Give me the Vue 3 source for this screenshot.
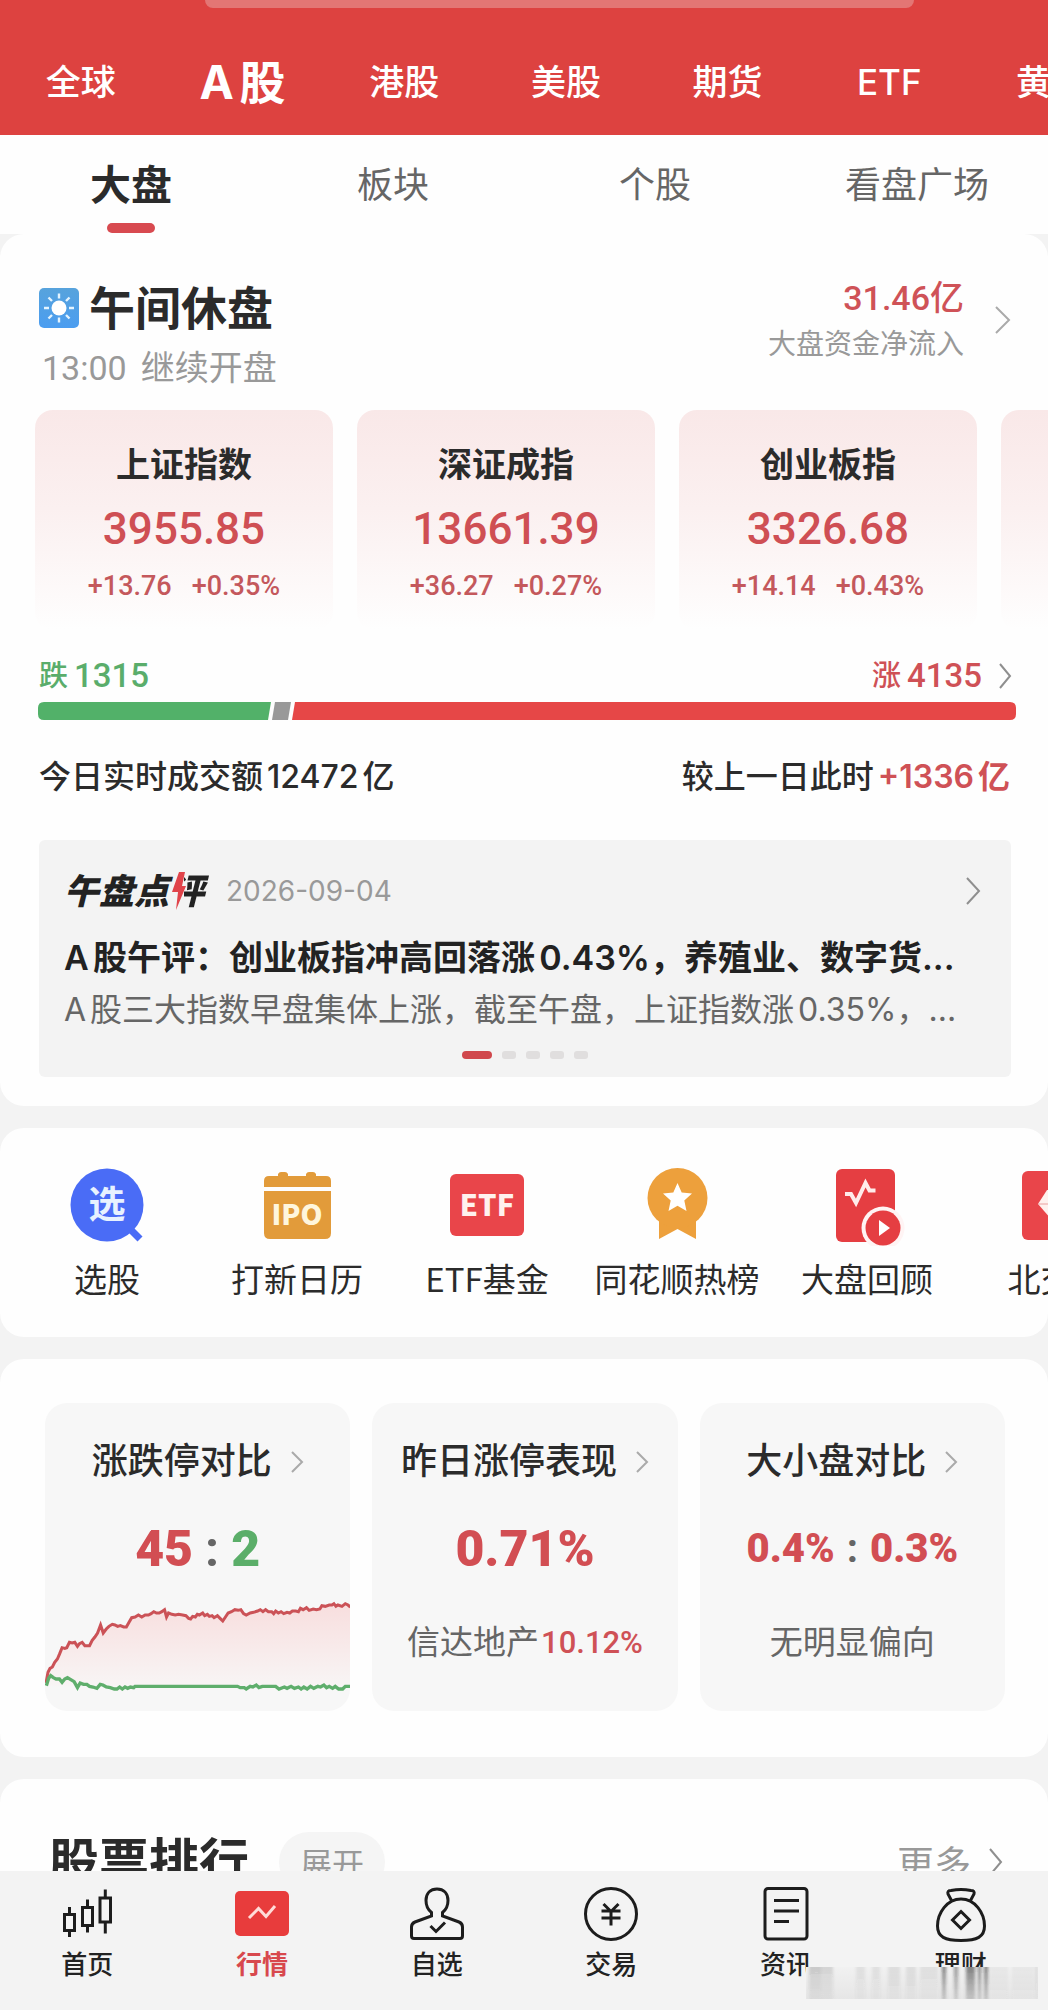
<script setup>
const markets = ['全球', 'A股', '港股', '美股', '期货', 'ETF', '黄金']
const sections = ['大盘', '板块', '个股', '看盘广场']

const indices = [
  { name: '上证指数', value: '3955.85', diff: '+13.76', pct: '+0.35%' },
  { name: '深证成指', value: '13661.39', diff: '+36.27', pct: '+0.27%' },
  { name: '创业板指', value: '3326.68', diff: '+14.14', pct: '+0.43%' },
]

const upLine =
  '78,362 84,330 90,318 97,314 104,300 112,290 118,276 126,256 134,258 140,256 148,240 156,242 164,240 172,252 178,244 186,240 194,250 208,250 216,234 224,224 232,212 241,188 249,212 258,200 266,192 276,186 284,188 292,192 300,190 310,194 318,194 326,180 334,166 344,164 354,158 364,164 374,158 384,158 392,154 400,148 408,152 416,152 424,148 432,142 438,164 444,152 454,156 464,158 474,156 486,158 496,160 504,168 510,170 516,162 524,164 530,156 536,158 546,152 552,160 560,156 566,162 574,160 580,166 590,160 598,168 606,176 614,164 622,152 632,148 642,142 652,144 660,142 668,154 676,158 688,152 698,150 710,146 718,142 726,148 734,142 742,148 752,148 758,154 764,146 772,152 780,148 788,154 798,150 806,152 814,146 824,146 832,148 838,138 846,142 856,136 864,144 876,140 886,142 896,140 902,130 912,132 924,128 932,128 938,124 944,132 950,128 962,132 972,124 980,128 987,134'
const downLine =
  '79,370 86,348 92,340 100,346 108,350 118,350 126,360 134,350 142,346 152,352 162,358 172,376 180,362 190,366 200,366 208,372 218,374 230,378 240,366 248,368 258,374 270,376 282,380 290,380 298,374 306,380 314,374 322,378 330,374 340,376 344,372 650,372 658,376 670,376 676,380 688,372 696,374 706,368 714,376 724,372 740,372 764,372 774,380 790,374 798,378 810,372 820,378 832,374 840,380 848,374 858,380 868,372 878,378 890,372 898,374 908,368 916,376 924,372 934,378 942,372 952,380 964,380 972,372 987,372'
const upArea = `78,372 ${upLine} 987,372`

const streaks = [
  [3, 12, 0.16], [15, 12, 0.12], [50, 9, 0.07], [66, 8, 0.07], [82, 12, 0.08], [100, 10, 0.08],
  [114, 18, 0.07], [136, 4, 0.5], [148, 4, 0.4], [160, 9, 0.5], [172, 3, 0.5], [178, 4, 0.5], [184, 18, 0.04], [206, 22, 0.04], [230, 1, 0.25],
]
</script>

<template>
  <div class="app">
    <header class="top">
      <div class="search-edge"></div>
      <nav class="markets">
        <a v-for="(m, i) in markets" :key="m" href="#" :class="{ on: i === 1 }">{{ m }}</a>
      </nav>
    </header>

    <main class="content">
      <nav class="sections">
        <a v-for="(s, i) in sections" :key="s" href="#" :class="{ on: i === 0 }">{{ s }}</a>
      </nav>

      <section class="card overview">
        <div class="status">
          <div class="status-left">
            <h1>
              <svg width="40" height="40" viewBox="0 0 40 40" aria-hidden="true">
                <defs>
                  <linearGradient id="sky" x1="0" y1="0" x2="0" y2="1">
                    <stop offset="0" stop-color="#57a3dc" />
                    <stop offset="1" stop-color="#4b9df0" />
                  </linearGradient>
                </defs>
                <rect width="40" height="40" rx="5" fill="url(#sky)" />
                <circle cx="20" cy="20" r="7.5" fill="#fff" />
                <path d="M20 5.5v5M20 29.5v5M5 20h5M30 20h5M9.5 9.5l3.5 3.5M27 27l3.5 3.5M30.5 9.5L27 13M13 27l-3.500 3.500" stroke="#e4f4ff" stroke-width="2.400" />
              </svg>
              <span>午间休盘</span>
            </h1>
            <p><span class="clock">13:00</span><span>继续开盘</span></p>
          </div>
          <a href="#" class="flow">
            <span class="flow-text">
              <b>31.46亿</b>
              <small>大盘资金净流入</small>
            </span>
            <svg class="chev light" width="18" height="30" viewBox="0 0 18 30"><path d="M2 2l13 13L2 28" /></svg>
          </a>
        </div>

        <div class="indices">
          <a v-for="x in indices" :key="x.name" href="#" class="index">
            <span class="index-name">{{ x.name }}</span>
            <span class="index-value">{{ x.value }}</span>
            <span class="index-change"><span>{{ x.diff }}</span><span>{{ x.pct }}</span></span>
          </a>
          <div class="index"></div>
        </div>

        <div class="breadth">
          <span class="down">跌<b>1315</b></span>
          <a href="#" class="up">涨<b>4135</b>
            <svg class="chev" width="14" height="28" viewBox="0 0 14 28"><path d="M2 2l10 12L2 26" /></svg>
          </a>
        </div>
        <svg class="bar" viewBox="0 0 978 18" preserveAspectRatio="none" aria-hidden="true">
          <path d="M6 0H233L230 18H6Q0 18 0 12V6Q0 0 6 0Z" fill="#52b169" />
          <path d="M237 0H253L250 18H234Z" fill="#999" />
          <path d="M257 0H972Q978 0 978 6V12Q978 18 972 18H254Z" fill="#e64747" />
        </svg>
        <div class="turnover">
          <span>今日实时成交额12472亿</span>
          <span>较上一日此时<em>+1336亿</em></span>
        </div>

        <article class="comment">
          <div class="comment-head">
            <h2>午盘点<span class="last">评<svg width="15" height="38" viewBox="0 0 15 38" aria-hidden="true"><path d="M8 0h6l-3 14h4L5 38l2-18H1z" fill="#e0434a" /></svg></span></h2>
            <time>2026-09-04</time>
            <svg class="chev" width="18" height="30" viewBox="0 0 18 30"><path d="M3 2l12 13L3 28" /></svg>
          </div>
          <h3>A股午评：创业板指冲高回落涨0.43%，养殖业、数字货...</h3>
          <p>A股三大指数早盘集体上涨，截至午盘，上证指数涨0.35%，...</p>
          <div class="dots"><i class="on"></i><i></i><i></i><i></i><i></i></div>
        </article>
      </section>

      <section class="card tools">
        <a href="#">
          <span class="tool-icon">
            <svg width="80" height="80" viewBox="0 0 80 80">
              <circle cx="40" cy="39" r="36.500" fill="#4a6cf6" />
              <path d="M60 60l13 13" stroke="#4a6cf6" stroke-width="7" />
              <text x="40" y="52" font-size="37" font-weight="700" fill="#e8f2ff" text-anchor="middle">选</text>
            </svg>
          </span>选股
        </a>
        <a href="#">
          <span class="tool-icon">
            <svg width="80" height="80" viewBox="0 0 80 80" fill="#e29b3a">
              <path d="M7 21V15Q7 10 12 10H21V8Q22 6 24 6H28Q30 6 31 8V10H49V8Q50 6 52 6H56Q58 6 59 8V10H69Q74 10 74 15V21Z" />
              <path d="M7 25H74V67Q74 73 68 73H13Q7 73 7 67Z" />
              <text x="40" y="59" font-size="28" font-weight="900" fill="#fff6dc" text-anchor="middle">IPO</text>
            </svg>
          </span>打新日历
        </a>
        <a href="#">
          <span class="tool-icon">
            <svg width="80" height="80" viewBox="0 0 80 80">
              <rect x="3" y="8" width="74" height="62" rx="6" fill="#e9454a" />
              <text x="40" y="50" font-size="29" font-weight="900" fill="#fff1ee" text-anchor="middle">ETF</text>
            </svg>
          </span>ETF基金
        </a>
        <a href="#">
          <span class="tool-icon">
            <svg width="80" height="80" viewBox="0 0 80 80">
              <path d="M22 50H59V73L40.500 63L22 73Z" fill="#eda03c" />
              <circle cx="40.500" cy="32" r="30" fill="#eda03c" />
              <path d="M40.500 17l4.200 9.500 10.300 1-7.700 7 2.200 10.500-9-5.200-9 5.200 2.200-10.500-7.700-7 10.300-1z" fill="#fff" />
            </svg>
          </span>同花顺热榜
        </a>
        <a href="#">
          <span class="tool-icon">
            <svg width="80" height="80" viewBox="0 0 80 80">
              <rect x="9" y="3" width="59" height="73" rx="6" fill="#e53e42" />
              <path d="M18 28h6l5 9 9.500-20 4 7.500h6" fill="none" stroke="#ffecea" stroke-width="4" />
              <circle cx="56" cy="62" r="21.500" fill="#fff4f4" />
              <circle cx="56" cy="62" r="17.500" fill="#e53e42" />
              <path d="M52 54l11 8-11 8z" fill="#fff" />
            </svg>
          </span>大盘回顾
        </a>
        <a href="#">
          <span class="tool-icon">
            <svg width="80" height="80" viewBox="0 0 80 80">
              <rect x="5" y="5" width="71" height="69" rx="6" fill="#e9454a" />
              <path d="M21 38L30 24H50L59 38L40 60Z" fill="#fff1ee" />
              <path d="M21 38H59" stroke="#e9a0a0" stroke-width="1" />
            </svg>
          </span>北交所
        </a>
      </section>

      <section class="card stats">
        <a href="#" class="stat">
          <span class="stat-title">涨跌停对比<svg class="chev light" width="14" height="24" viewBox="0 0 14 24"><path d="M2 2l10 10L2 22" /></svg></span>
          <span class="stat-num"><b>45</b><i>:</i><b class="green">2</b></span>
          <svg class="chart" viewBox="75 110 912 276" preserveAspectRatio="none" aria-hidden="true">
            <defs>
              <linearGradient id="fade" x1="0" y1="0" x2="0" y2="1">
                <stop offset="0" stop-color="#f8dede" />
                <stop offset="1" stop-color="#f8f5f5" />
              </linearGradient>
            </defs>
            <polygon :points="upArea" fill="url(#fade)" />
            <polyline :points="upLine" fill="none" stroke="#cb5257" stroke-width="9" />
            <polyline :points="downLine" fill="none" stroke="#5fae6c" stroke-width="10" />
          </svg>
        </a>
        <a href="#" class="stat">
          <span class="stat-title">昨日涨停表现<svg class="chev light" width="14" height="24" viewBox="0 0 14 24"><path d="M2 2l10 10L2 22" /></svg></span>
          <span class="stat-num"><b>0.71%</b></span>
          <span class="stat-note"><span>信达地产</span><em>10.12%</em></span>
        </a>
        <a href="#" class="stat">
          <span class="stat-title">大小盘对比<svg class="chev light" width="14" height="24" viewBox="0 0 14 24"><path d="M2 2l10 10L2 22" /></svg></span>
          <span class="stat-num small"><b>0.4%</b><i>:</i><b>0.3%</b></span>
          <span class="stat-note">无明显偏向</span>
        </a>
      </section>

      <section class="card ranking">
        <h2>股票排行</h2>
        <button type="button">展开</button>
        <a href="#">更多<svg class="chev" width="14" height="30" viewBox="0 0 14 30"><path d="M1 2l11 13L1 28" /></svg></a>
      </section>
    </main>

    <nav class="tabbar">
      <a href="#">
        <svg width="56" height="56" viewBox="0 0 56 56">
          <path d="M5.500 28.500h10v16h-10zM10.500 21v7M10.500 45v6M23.500 21.500h10v18h-10zM28.500 13.500v8M28.500 40v6.500M41 12h10.500v24H41zM46.300 3.500V12M46.300 36v11.500" />
        </svg>首页
      </a>
      <a href="#" class="on">
        <svg width="56" height="56" viewBox="0 0 56 56">
          <rect x="1" y="5" width="54" height="45" rx="5" fill="#e83c3c" stroke="none" />
          <path d="M15 32l9.500-9.500 7.500 8L41 20" stroke="#ffdcd8" />
        </svg>行情
      </a>
      <a href="#">
        <svg width="56" height="56" viewBox="0 0 56 56">
          <path d="M22.500 30V26.500C18 23 17 19 17 14.500C17 7 21.500 3 28 3S39 7 39 14.500C39 19 38 23 33.500 26.500V30L50 36Q53.500 37.500 53.500 41V50Q53.500 52.500 51 52.500H5Q2.500 52.500 2.500 50V41Q2.500 37.500 6 36Z" />
          <path d="M21.500 40l5.500 5.500L36 36.500" />
        </svg>自选
      </a>
      <a href="#">
        <svg width="56" height="56" viewBox="0 0 56 56">
          <circle cx="28" cy="28" r="25.500" />
          <path d="M20.500 18l7.500 7.500L35.500 18M18.500 25h19M18.500 32h19M28 25v14.500" />
        </svg>交易
      </a>
      <a href="#">
        <svg width="56" height="56" viewBox="0 0 56 56">
          <rect x="7" y="2.500" width="42" height="50.500" rx="3" />
          <path d="M16 14.500h25M16 25h25M16 35.500h15" />
        </svg>资讯
      </a>
      <a href="#">
        <svg width="56" height="56" viewBox="0 0 56 56">
          <path d="M18.500 14.500L15 8Q14 4.500 18 4.500Q28 2.500 38 4.500Q42 4.500 41 8L37.500 14.500M28 13C14 13 4.500 27 4.500 40C4.500 51 12 54.500 28 54.500S51.500 51 51.500 40C51.500 27 42 13 28 13ZM28 25.500l8.500 8.500-8.500 8.500-8.500-8.500z" />
        </svg>理财
      </a>
      <div class="smudge" aria-hidden="true">
        <svg width="232" height="34" viewBox="0 0 232 34">
          <defs>
            <linearGradient id="veil" x1="0" y1="0" x2="0" y2="1">
              <stop offset="0" stop-color="#f1f1f1" />
              <stop offset="1" stop-color="#e6e6e6" />
            </linearGradient>
            <linearGradient id="streak" x1="0" y1="0" x2="0" y2="1">
              <stop offset="0" stop-color="#111" />
              <stop offset="1" stop-color="#555" stop-opacity="0.500" />
            </linearGradient>
            <filter id="soft" x="-5%" y="-20%" width="110%" height="140%"><feGaussianBlur stdDeviation="1.400 0.600" /></filter>
          </defs>
          <rect width="232" height="32" fill="url(#veil)" />
          <g filter="url(#soft)">
            <rect v-for="(s, i) in streaks" :key="i" :x="s[0]" y="0" :width="s[1]" height="32" :opacity="s[2]" fill="url(#streak)" />
          </g>
        </svg>
      </div>
    </nav>
  </div>
</template>

<style>
body {
  margin: 0;
  background: #f3f3f3;
}
</style>

<style scoped>
.app {
  display: flex;
  flex-direction: column;
  height: 100vh;
  overflow: hidden;
  background: #f3f3f3;
  color: #2b2b2b;
  font-family: Inter, 'Noto Sans CJK SC', sans-serif;
  text-autospace: normal;
}
a {
  color: inherit;
  text-decoration: none;
}
h1, h2, h3, p {
  margin: 0;
}
i, em {
  font-style: normal;
}
svg {
  display: block;
  flex: none;
}
svg text {
  font-family: 'Noto Sans CJK SC', sans-serif;
}
.chev path {
  fill: none;
  stroke: #8f8f8f;
  stroke-width: 2;
}
.chev.light path {
  stroke: #aaa;
}

.top {
  flex: none;
  background: #dd4240;
  overflow: hidden;
}
.search-edge {
  height: 8px;
  margin: 0 134px 0 205px;
  border-radius: 0 0 8px 8px;
  background: #e37674;
}
.markets {
  display: flex;
  width: 108%;
  padding: 44px 0 23px;
}
.markets a {
  flex: 1;
  text-align: center;
  white-space: nowrap;
  color: #fff;
  font-size: 35px;
  font-weight: 500;
  line-height: 60px;
}
.markets a.on {
  font-size: 46px;
  font-weight: 700;
}

.content {
  flex: 1;
  min-height: 0;
  overflow: hidden auto;
  scrollbar-width: none;
}
.sections {
  display: grid;
  grid-template-columns: repeat(4, 1fr);
  height: 71px;
  padding-top: 28px;
  background: #fefefe;
}
.sections a {
  display: flex;
  flex-direction: column;
  align-items: center;
  color: #666;
  font-size: 36px;
  line-height: 44px;
}
.sections a.on {
  color: #2b2b2b;
  font-size: 41px;
  font-weight: 700;
}
.sections a.on::after {
  content: '';
  width: 48px;
  height: 10px;
  margin-top: 16px;
  border-radius: 5px;
  background: #d84a50;
}

.card {
  margin-bottom: 22px;
  border-radius: 24px;
  background: #fefefe;
}

.overview {
  padding: 46px 36px 29px 39px;
}
.status {
  display: flex;
  justify-content: space-between;
  align-items: flex-start;
}
.status-left {
  padding-top: 4px;
}
.status h1 {
  display: flex;
  align-items: center;
  gap: 10px;
  font-size: 46px;
  line-height: 48px;
}
.status p {
  display: flex;
  margin-top: 16px;
  color: #999;
  font-size: 34px;
  line-height: 40px;
}
.clock {
  margin: 0 14px 0 3px;
  font-family: Roboto, sans-serif;
}
.flow {
  display: flex;
  align-items: center;
  gap: 30px;
}
.flow-text {
  display: flex;
  flex-direction: column;
  gap: 12px;
  text-align: right;
}
.flow b {
  color: #cf5257;
  font: 500 34px/36px Roboto, 'Noto Sans CJK SC', sans-serif;
  text-autospace: no-autospace;
}
.flow small {
  color: #999;
  font-size: 28px;
  line-height: 32px;
}

.indices {
  display: flex;
  gap: 24px;
  margin: 22px -36px 0 -4px;
  overflow: hidden;
}
.index {
  flex: 0 0 298px;
  display: flex;
  flex-direction: column;
  align-items: center;
  box-sizing: border-box;
  padding: 33px 0 28px;
  border-radius: 18px;
  background: linear-gradient(#f9e8e8, #fbf0f0 45%, #fefefe);
  font-family: Roboto, 'Noto Sans CJK SC', sans-serif;
}
.index-name {
  font-size: 34px;
  font-weight: 700;
  line-height: 44px;
}
.index-value {
  margin-top: 16px;
  color: #cf4f54;
  font-size: 44px;
  font-weight: 500;
  line-height: 52px;
}
.index-change {
  display: flex;
  gap: 20px;
  margin-top: 15px;
  color: #c4585c;
  font-size: 27px;
  font-weight: 500;
  line-height: 32px;
}

.breadth {
  display: flex;
  justify-content: space-between;
  margin-top: 28px;
  font: 500 29px/36px Roboto, 'Noto Sans CJK SC', sans-serif;
  text-autospace: no-autospace;
}
.breadth b {
  margin-left: 6px;
  font-size: 33px;
  font-weight: 500;
}
.down,
.up {
  display: flex;
  align-items: center;
}
.down {
  color: #5aad6b;
}
.up {
  color: #cf5156;
}
.up svg {
  margin-left: 16px;
}
.bar {
  width: calc(100% + 5px);
  height: 18px;
  margin: 8px 0 0 -1px;
}
.turnover {
  display: flex;
  justify-content: space-between;
  margin: 37px 2px 0 0;
  font-size: 32px;
  font-weight: 500;
  line-height: 40px;
}
.turnover em {
  margin-left: 4px;
  color: #cf5156;
  font-weight: 600;
}

.comment {
  margin: 43px 1px 0 0;
  padding: 29px 25px 18px;
  border-radius: 6px;
  background: #f3f3f3;
}
.comment-head {
  display: flex;
  align-items: center;
}
.comment h2 {
  font-size: 35px;
  font-weight: 900;
  font-style: italic;
  line-height: 44px;
  color: #222;
}
.last {
  position: relative;
  padding-right: 6px;
  background: linear-gradient(90deg, transparent 15px, #222 15px);
  background-clip: text;
  -webkit-background-clip: text;
  color: transparent;
}
.last svg {
  position: absolute;
  left: 2px;
  top: 2px;
}
.comment time {
  margin-left: 16px;
  color: #999;
  font-size: 28px;
}
.comment-head .chev {
  margin: 0 4px 0 auto;
}
.comment h3 {
  margin-top: 23px;
  color: #222;
  font-size: 34px;
  font-weight: 600;
  line-height: 44px;
  white-space: nowrap;
}
.comment p {
  margin-top: 10px;
  color: #666;
  font-size: 32px;
  line-height: 40px;
  white-space: nowrap;
}
.dots {
  display: flex;
  justify-content: center;
  gap: 10px;
  margin-top: 21px;
}
.dots i {
  width: 14px;
  height: 8px;
  border-radius: 3px;
  background: #e0dede;
}
.dots .on {
  width: 30px;
  border-radius: 4px;
  background: #d0474c;
}

.tools {
  display: flex;
  padding: 38px 0 39px 12px;
  overflow: hidden;
}
.tools a {
  flex: 0 0 190px;
  display: flex;
  flex-direction: column;
  align-items: center;
  gap: 12px;
  font-size: 33px;
  line-height: 40px;
  font-family: 'Noto Sans CJK SC', sans-serif;
  white-space: nowrap;
  text-autospace: no-autospace;
}

.stats {
  display: grid;
  grid-template-columns: repeat(3, 1fr);
  gap: 22px;
  padding: 44px 43px 46px 45px;
}
.stat {
  display: flex;
  flex-direction: column;
  align-items: center;
  padding-top: 37px;
  border-radius: 22px;
  background: #f7f7f7;
  overflow: hidden;
  font-family: Roboto, 'Noto Sans CJK SC', sans-serif;
  text-autospace: no-autospace;
}
.stat-title {
  display: flex;
  align-items: center;
  gap: 18px;
  font-size: 36px;
  font-weight: 500;
  line-height: 44px;
}
.stat-num {
  display: flex;
  align-items: center;
  margin-top: 37px;
  color: #d24e53;
  font-size: 50px;
  font-weight: 700;
  line-height: 56px;
}
.stat-num i {
  margin: 0 12px;
  color: #666;
}
.stat-num.small {
  font-size: 40px;
}
.stat-num.small i {
  margin: 0 12px;
}
.stat-num .green {
  color: #5bae69;
}
.stat-note {
  display: flex;
  align-items: center;
  margin: 46px 0 48px;
  color: #666;
  font-size: 33px;
  line-height: 40px;
}
.stat-note em {
  margin-left: 2px;
  color: #cf5156;
  font-size: 31px;
  font-weight: 500;
}
.chart {
  width: 100%;
  height: 92px;
  margin-top: 22px;
}

.ranking {
  display: flex;
  align-items: center;
  margin-bottom: 0;
  padding: 53px 45px 54px 49px;
}
.ranking h2 {
  font-size: 50px;
  line-height: 60px;
}
.ranking button {
  width: 106px;
  height: 60px;
  margin-left: 30px;
  padding: 0;
  border: 0;
  border-radius: 30px;
  background: #f5f5f5;
  color: #999;
  font: inherit;
  font-size: 32px;
}
.ranking a {
  display: flex;
  align-items: center;
  gap: 18px;
  margin-left: auto;
  color: #999;
  font-size: 37px;
}

.tabbar {
  flex: none;
  position: relative;
  display: grid;
  grid-template-columns: repeat(6, 1fr);
  padding: 15px 0 25px;
  background: #f3f3f3;
}
.tabbar a {
  display: flex;
  flex-direction: column;
  align-items: center;
  gap: 3px;
  color: #222;
  font-size: 26px;
  font-weight: 500;
  line-height: 40px;
}
.tabbar a svg {
  fill: none;
  stroke: #1c1c1c;
  stroke-width: 3;
}
.tabbar a.on {
  color: #d8484d;
  font-weight: 700;
}
.smudge {
  position: absolute;
  right: 10px;
  bottom: 9px;
}
</style>
